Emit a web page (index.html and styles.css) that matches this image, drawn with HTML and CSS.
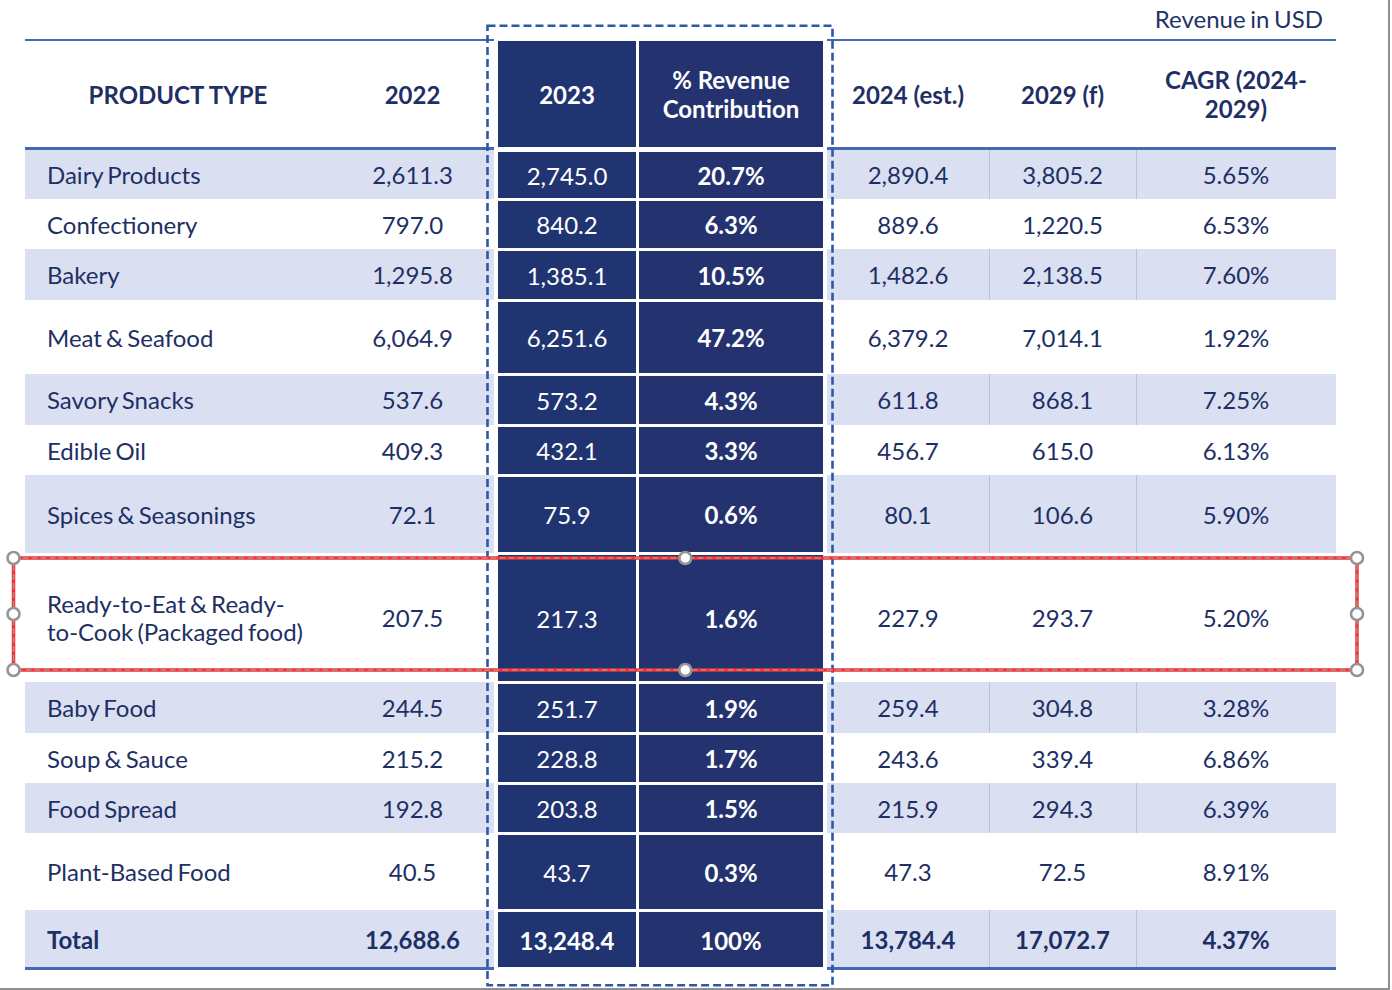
FILE: index.html
```html
<!DOCTYPE html>
<html>
<head>
<meta charset="utf-8">
<link rel="stylesheet" href="styles.css">
</head>
<body>
<div class="frame">
  <div class="page">
    <div class="caption">Revenue in USD</div>
    <div class="table">
      <div class="row head">
        <div class="name">PRODUCT TYPE</div>
        <div class="v">2022</div>
        <div class="gap"></div>
        <div class="dk">2023</div>
        <div class="gap"></div>
        <div class="dk dk2">% Revenue<br>Contribution</div>
        <div class="gap"></div>
        <div class="v">2024 (est.)</div>
        <div class="v sep">2029 (f)</div>
        <div class="v sep">CAGR (2024-<br>2029)</div>
      </div>
      <div class="row alt r49">
        <div class="name">Dairy Products</div><div class="v">2,611.3</div><div class="gap"></div>
        <div class="dk">2,745.0</div><div class="gap"></div><div class="dk dk2 b">20.7%</div><div class="gap"></div>
        <div class="v">2,890.4</div><div class="v sep">3,805.2</div><div class="v sep">5.65%</div>
      </div>
      <div class="row r50">
        <div class="name">Confectionery</div><div class="v">797.0</div><div class="gap"></div>
        <div class="dk">840.2</div><div class="gap"></div><div class="dk dk2 b">6.3%</div><div class="gap"></div>
        <div class="v">889.6</div><div class="v sep">1,220.5</div><div class="v sep">6.53%</div>
      </div>
      <div class="row alt r51">
        <div class="name">Bakery</div><div class="v">1,295.8</div><div class="gap"></div>
        <div class="dk">1,385.1</div><div class="gap"></div><div class="dk dk2 b">10.5%</div><div class="gap"></div>
        <div class="v">1,482.6</div><div class="v sep">2,138.5</div><div class="v sep">7.60%</div>
      </div>
      <div class="row r74">
        <div class="name">Meat &amp; Seafood</div><div class="v">6,064.9</div><div class="gap"></div>
        <div class="dk">6,251.6</div><div class="gap"></div><div class="dk dk2 b">47.2%</div><div class="gap"></div>
        <div class="v">6,379.2</div><div class="v sep">7,014.1</div><div class="v sep">1.92%</div>
      </div>
      <div class="row alt r51">
        <div class="name">Savory Snacks</div><div class="v">537.6</div><div class="gap"></div>
        <div class="dk">573.2</div><div class="gap"></div><div class="dk dk2 b">4.3%</div><div class="gap"></div>
        <div class="v">611.8</div><div class="v sep">868.1</div><div class="v sep">7.25%</div>
      </div>
      <div class="row r50">
        <div class="name">Edible Oil</div><div class="v">409.3</div><div class="gap"></div>
        <div class="dk">432.1</div><div class="gap"></div><div class="dk dk2 b">3.3%</div><div class="gap"></div>
        <div class="v">456.7</div><div class="v sep">615.0</div><div class="v sep">6.13%</div>
      </div>
      <div class="row alt r78">
        <div class="name">Spices &amp; Seasonings</div><div class="v">72.1</div><div class="gap"></div>
        <div class="dk">75.9</div><div class="gap"></div><div class="dk dk2 b">0.6%</div><div class="gap"></div>
        <div class="v">80.1</div><div class="v sep">106.6</div><div class="v sep">5.90%</div>
      </div>
      <div class="row r129">
        <div class="name">Ready-to-Eat &amp; Ready-<br>to-Cook (Packaged food)</div><div class="v">207.5</div><div class="gap"></div>
        <div class="dk">217.3</div><div class="gap"></div><div class="dk dk2 b">1.6%</div><div class="gap"></div>
        <div class="v">227.9</div><div class="v sep">293.7</div><div class="v sep">5.20%</div>
      </div>
      <div class="row alt r51">
        <div class="name">Baby Food</div><div class="v">244.5</div><div class="gap"></div>
        <div class="dk">251.7</div><div class="gap"></div><div class="dk dk2 b">1.9%</div><div class="gap"></div>
        <div class="v">259.4</div><div class="v sep">304.8</div><div class="v sep">3.28%</div>
      </div>
      <div class="row r50">
        <div class="name">Soup &amp; Sauce</div><div class="v">215.2</div><div class="gap"></div>
        <div class="dk">228.8</div><div class="gap"></div><div class="dk dk2 b">1.7%</div><div class="gap"></div>
        <div class="v">243.6</div><div class="v sep">339.4</div><div class="v sep">6.86%</div>
      </div>
      <div class="row alt r50">
        <div class="name">Food Spread</div><div class="v">192.8</div><div class="gap"></div>
        <div class="dk">203.8</div><div class="gap"></div><div class="dk dk2 b">1.5%</div><div class="gap"></div>
        <div class="v">215.9</div><div class="v sep">294.3</div><div class="v sep">6.39%</div>
      </div>
      <div class="row r77">
        <div class="name">Plant-Based Food</div><div class="v">40.5</div><div class="gap"></div>
        <div class="dk">43.7</div><div class="gap"></div><div class="dk dk2 b">0.3%</div><div class="gap"></div>
        <div class="v">47.3</div><div class="v sep">72.5</div><div class="v sep">8.91%</div>
      </div>
      <div class="row alt total">
        <div class="name">Total</div><div class="v">12,688.6</div><div class="gap"></div>
        <div class="dk">13,248.4</div><div class="gap"></div><div class="dk dk2">100%</div><div class="gap"></div>
        <div class="v">13,784.4</div><div class="v sep">17,072.7</div><div class="v sep">4.37%</div>
      </div>
    </div>
  </div>
  <svg class="overlay" width="1392" height="990" viewBox="0 0 1392 990">
    <rect class="blue-dash" x="487.5" y="25.7" width="345" height="959.6"/>
    <rect class="sel-red" x="13.5" y="558" width="1343.5" height="112"/>
    <rect class="sel-gray" x="13.5" y="558" width="1343.5" height="112"/>
    <circle class="handle" cx="13.5" cy="558" r="6"/>
    <circle class="handle" cx="13.5" cy="614" r="6"/>
    <circle class="handle" cx="13.5" cy="670" r="6"/>
    <circle class="handle" cx="1357" cy="558" r="6"/>
    <circle class="handle" cx="1357" cy="614" r="6"/>
    <circle class="handle" cx="1357" cy="670" r="6"/>
    <circle class="handle" cx="685.3" cy="558" r="6"/>
    <circle class="handle" cx="685.3" cy="670" r="6"/>
  </svg>
</div>
</body>
</html>
```

FILE: styles.css
```css
* { box-sizing: border-box; }
html, body { margin: 0; padding: 0; background: #fff; }
body {
  font-family: Lato, "Open Sans", sans-serif;
  color: #1d2f64;
  font-size: 24px;
}
.frame {
  position: relative;
  width: 1390px;
  height: 990px;
  border-right: 2px solid #8f8f8f;
  border-bottom: 2px solid #8f8f8f;
  overflow: hidden;
}
.page {
  padding-left: 25px;
  width: 1336px;
}
.caption {
  height: 39px;
  display: flex;
  justify-content: flex-end;
  align-items: center;
  padding-right: 13px;
  padding-bottom: 3px;
  font-size: 24px;
  color: #1f3368;
  word-spacing: -1.5px;
}
.table { width: 1311px; }
.row {
  display: grid;
  grid-template-columns: 306px 163px 4px 138px 3px 184px 4px 162px 147px 200px;
}
.row > div {
  display: flex;
  align-items: center;
  justify-content: center;
  text-align: center;
  line-height: 28px;
  padding-top: 1px;
}
.row > .name {
  justify-content: flex-start;
  text-align: left;
  padding-left: 22px;
  word-spacing: -2px;
}
.alt > .name, .alt > .v { background: #dae0f1; }
.alt > .sep { box-shadow: inset 1px 0 0 #b6c4e4; }
.dk {
  background: #1f3471;
  color: #fff;
  border-top: 2px solid #fff;
  border-bottom: 1px solid #fff;
}
.dk2 { background: #24336f; }
.b { font-weight: 700; }

.head { height: 111px; font-weight: 700; }
.head > div { line-height: 29px; padding-top: 0; }
.head > .name { justify-content: center; padding-left: 0; word-spacing: 0; }
.head > .name, .head > .v {
  border-top: 2px solid #4568b5;
  border-bottom: 3px solid #4568b5;
  color: #1f2f66;
}
.head > .dk {
  border-top: 2px solid #fff;
  border-bottom: 3px solid #fff;
}

.r49 { height: 49px; }
.r50 { height: 50px; }
.r51 { height: 51px; }
.r74 { height: 74px; }
.r77 { height: 77px; }
.r78 { height: 78px; }
.r129 { height: 129px; }

.total { height: 60px; font-weight: 700; }
.total > div { padding-top: 3px; }
.total > .name, .total > .v { border-bottom: 3px solid #4568b5; }
.total > .dk { border-bottom: 3px solid #fff; }

.overlay {
  position: absolute;
  left: 0;
  top: 0;
  pointer-events: none;
}
.blue-dash {
  fill: none;
  stroke: #2e58a6;
  stroke-width: 2.6;
  stroke-dasharray: 8 4;
}
.sel-red {
  fill: none;
  stroke: #ff2a2a;
  stroke-width: 3.5;
}
.sel-gray {
  fill: none;
  stroke: #9a9a9a;
  stroke-width: 1.4;
  stroke-dasharray: 6 3;
}
.handle {
  fill: #fff;
  stroke: #959595;
  stroke-width: 2.6;
}
```
